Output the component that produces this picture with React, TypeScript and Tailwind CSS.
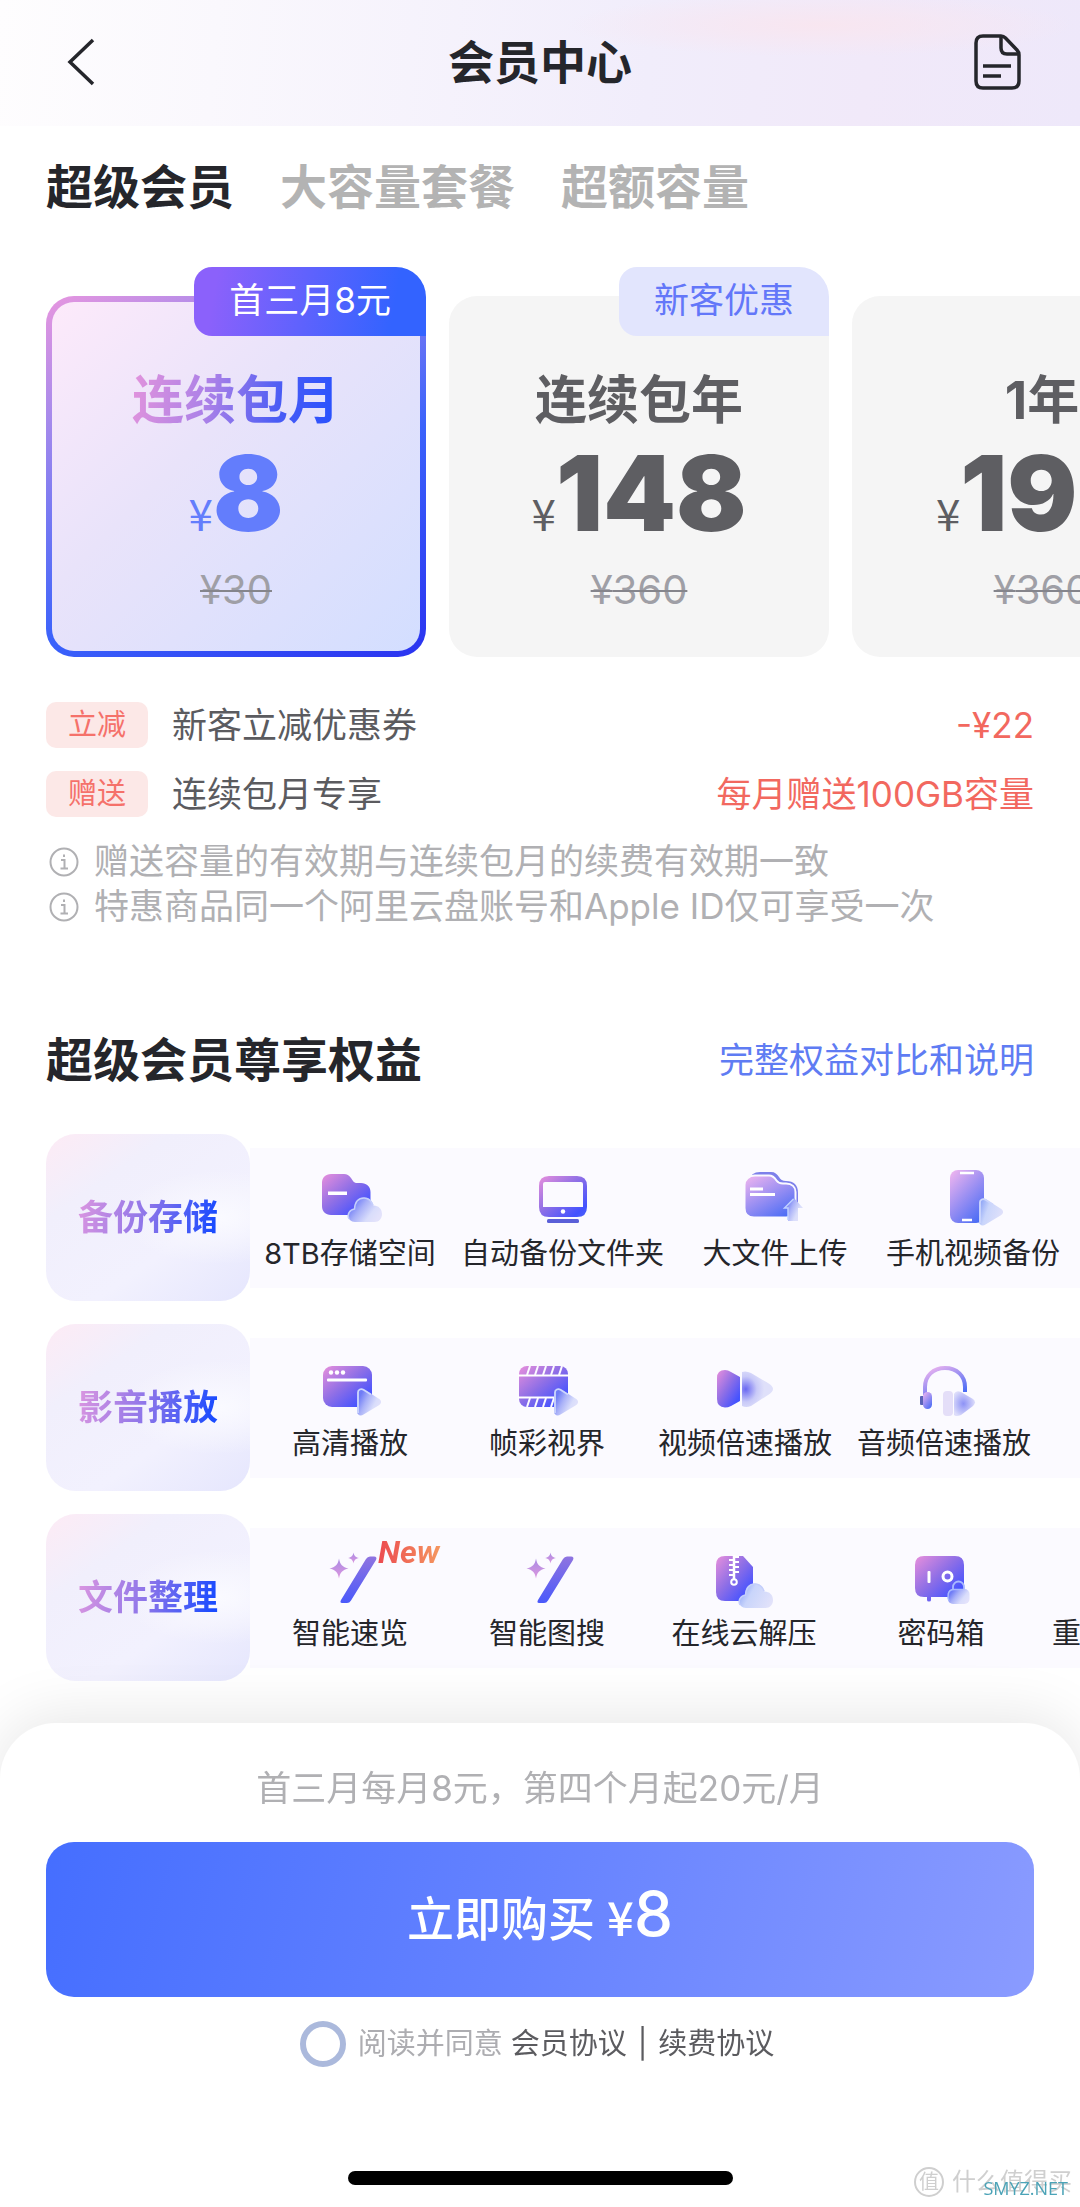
import React, { useState } from "react";

const CJK = "font-[Inter,'Noto_Sans_CJK_SC',sans-serif]";

function IconDefs() {
  return (
    <svg className="absolute h-0 w-0" aria-hidden="true">
      <defs>
        <linearGradient id="main" x1="0" y1="0" x2="1" y2="1">
          <stop offset="0" stopColor="#e88fdc" />
          <stop offset="0.45" stopColor="#8f6fe6" />
          <stop offset="0.85" stopColor="#4352ff" />
          <stop offset="1" stopColor="#4a62f8" />
        </linearGradient>
        <linearGradient id="soft" x1="0.1" y1="0" x2="0.8" y2="1">
          <stop offset="0" stopColor="#ecb3ef" />
          <stop offset="0.45" stopColor="#a393f2" />
          <stop offset="1" stopColor="#4a6cf5" />
        </linearGradient>
        <linearGradient id="glass" x1="0" y1="0.3" x2="0.9" y2="0.8">
          <stop offset="0.1" stopColor="#6f7cf6" />
          <stop offset="0.4" stopColor="#a9b1f8" />
          <stop offset="0.75" stopColor="#d9ddfb" />
          <stop offset="1" stopColor="#e3e2fb" />
        </linearGradient>
        <linearGradient id="paleGlass" x1="0" y1="0.3" x2="1" y2="0.7">
          <stop offset="0" stopColor="#8fa6f6" />
          <stop offset="0.35" stopColor="#c9d5fb" />
          <stop offset="1" stopColor="#e2e2fa" />
        </linearGradient>
        <linearGradient id="wand" x1="0" y1="0" x2="0" y2="1">
          <stop offset="0" stopColor="#8f74e0" />
          <stop offset="1" stopColor="#4a59fb" />
        </linearGradient>
        <linearGradient id="star" x1="0" y1="0" x2="0" y2="1">
          <stop offset="0" stopColor="#a98be4" />
          <stop offset="1" stopColor="#dd97df" />
        </linearGradient>
        <radialGradient id="spot" cx="0.12" cy="0.5" r="0.6">
          <stop offset="0" stopColor="#6a68f2" />
          <stop offset="0.6" stopColor="#c9caf8" />
          <stop offset="1" stopColor="#dfe0fa" />
        </radialGradient>
        <radialGradient id="core" cx="0.45" cy="0.5" r="0.55">
          <stop offset="0" stopColor="#8d92f6" />
          <stop offset="1" stopColor="#dcdcfa" />
        </radialGradient>
      </defs>
    </svg>
  );
}

function Cloud({ x, y, fill = "url(#glass)" }: { x: number; y: number; fill?: string }) {
  return (
    <g transform={`translate(${x} ${y})`}>
      <path
        d="M7 25C3 25 0 22 0 18.500C0 15 2.500 12.500 6 12C6.500 5 10 0.500 16 0.500C21 0.500 24.500 4 25.500 8.500C30.500 8.500 34 12 34 17C34 21.500 31 25 26.500 25Z"
        fill={fill}
      />
      <path d="M1 22C-1.500 17 2 12.500 6.500 12C7 5 10 1 16 1C20 1 23 3 25 8" fill="none" stroke="#c5cffb" strokeWidth="1.500" />
    </g>
  );
}

function Play({ x, y, fill = "url(#glass)" }: { x: number; y: number; fill?: string }) {
  return (
    <g transform={`translate(${x} ${y})`}>
      <path d="M0 4.500C0 1 3.500 -0.500 6.500 1L21.500 10.500C25 12.700 25 15.300 21.500 17.500L6.500 26.500C3.500 28.500 0 27 0 23.500Z" fill={fill} />
      <path d="M1 25V4.500C1 1.500 4 0.500 6.500 1.800L14 6.500" fill="none" stroke="#cdd6fc" strokeWidth="1.800" />
    </g>
  );
}

const icons: Record<string, React.ReactNode> = {
  storage: (
    <>
      <path d="M13 9H26C29 9 31 10.500 33 13L35 16C36 17.500 37.500 18 39 18H43C48.500 18 52.500 21.500 52.500 27V41C52.500 46.500 49 50 43.500 50H13C7.500 50 4 46.500 4 41V18C4 12.500 7.500 9 13 9Z" fill="url(#main)" />
      <rect x="10" y="26.500" width="19" height="3.500" fill="#fff" />
      <Cloud x={30} y={32} />
    </>
  ),
  monitor: (
    <>
      <path fillRule="evenodd" d="M18 11H46Q56 11 56 21V42Q56 52 46 52H18Q8 52 8 42V21Q8 11 18 11ZM14 17Q12 17 12 19V42H52V19Q52 17 50 17Z" fill="url(#main)" />
      <circle cx="32" cy="46.500" r="2.200" fill="#fff" />
      <rect x="16" y="54" width="32" height="4" rx="1.500" fill="#5a5fd8" />
    </>
  ),
  upload: (
    <>
      <path d="M5 16Q8 7 17 7H28C32 7 34 9 36 12C37.500 14.500 39.500 16 43 16C51 16 55 20 55 28V42H30Z" fill="#7d80ea" />
      <path
        d="M12 10.500H26C30 10.500 31.500 12.500 33.500 15.500C35 17.800 37 18.500 40 18.500H43C49 18.500 52.500 22 52.500 27V43C52.500 49 49 52.500 43 52.500H11C5 52.500 1.500 49 1.500 43V20C1.500 14.500 6 10.500 12 10.500Z"
        fill="url(#soft)"
        stroke="#fbfaff"
        strokeWidth="2"
      />
      <path d="M7 24H20M7 29.500H32" stroke="#fff" strokeWidth="3" />
      <path d="M51 33L60 43H55V56H45V43H41Z" fill="url(#glass)" />
      <path d="M45 55V43H41.500L50.500 34" fill="none" stroke="#bfd0ff" strokeWidth="1.500" />
    </>
  ),
  phone: (
    <>
      <rect x="9" y="5" width="34" height="53" rx="8" fill="url(#soft)" />
      <path d="M19 8H33M21 55H31" stroke="#fff" strokeWidth="2.400" />
      <Play x={38} y={33} fill="url(#paleGlass)" />
    </>
  ),
  window: (
    <>
      <rect x="5" y="11" width="49" height="41" rx="9" fill="url(#main)" />
      <circle cx="13" cy="17.500" r="2.200" fill="#fff" />
      <circle cx="19" cy="17.500" r="2.200" fill="#fff" />
      <circle cx="25" cy="17.500" r="2.200" fill="#fff" />
      <rect x="9" y="23.500" width="40" height="3" rx="1" fill="#fff" />
      <Play x={39} y={33} />
    </>
  ),
  film: (
    <>
      <rect x="4" y="11" width="49" height="41" rx="8" fill="url(#main)" />
      <path d="M3 20.500H54M3 42.500H54" stroke="#fff" strokeWidth="2" />
      <path d="M12 20L15 11M20 20L23 11M28 20L31 11M36 20L39 11M44 20L47 11M12 52L15 43M20 52L23 43M28 52L31 43M36 52L39 43" stroke="#fbfaff" strokeWidth="2" />
      <Play x={39} y={33} />
    </>
  ),
  speed: (
    <>
      <path d="M4 23Q4 15 12 15Q15 15 18 17L27 22V46L18 51Q15 52.500 12 52.500Q4 52 4 44Z" fill="url(#main)" />
      <path d="M29 17Q33 15.500 38 18L55 28Q60 31 60 34Q60 37 55 40L38 51Q33 53 29 51Z" fill="url(#spot)" />
    </>
  ),
  headphone: (
    <>
      <path d="M13 40V32C13 21 21 13 33 13C45 13 53 21 53 32V37" fill="none" stroke="url(#soft)" strokeWidth="4" />
      <rect x="8" y="41" width="4" height="9" rx="1" fill="#5a63b8" />
      <rect x="11" y="37" width="9" height="17" rx="4.500" fill="url(#soft)" />
      <rect x="31" y="36" width="10" height="25" rx="4" fill="#e4def8" />
      <path d="M42 39Q44 35 49 37L61 44Q65 47 61 51L49 60Q44 62 42 60Z" fill="url(#core)" />
    </>
  ),
  wand: (
    <>
      <path d="M48 14Q49.500 11.500 52 11.500H56Q59.500 11.500 58 15L33 55.500Q31.500 58 29 58H24Q21.500 58 23 55Z" fill="url(#wand)" />
      <path d="M21 13.500C22 19.500 24.500 22 30.500 23.500C24.500 25 22 27.500 21 33.500C20 27.500 17.500 25 11.500 23.500C17.500 22 20 19.500 21 13.500Z" fill="url(#star)" />
      <path d="M35.500 7.500C36.200 11 37.500 12.300 41 13C37.500 13.700 36.200 15 35.500 18.500C34.800 15 33.500 13.700 30 13C33.500 12.300 34.800 11 35.500 7.500Z" fill="url(#star)" />
    </>
  ),
  zip: (
    <>
      <path d="M13 11H31L41 22V47Q41 56 32 56H13Q4 56 4 47V20Q4 11 13 11Z" fill="url(#main)" />
      <path d="M17 15H21M17 20H21M17 25H21M17 30H21M23 12H27M23 17H27M23 22H27M23 27H27" stroke="#fff" strokeWidth="2" />
      <path d="M22 10V34" stroke="#fff" strokeWidth="2.500" />
      <circle cx="22" cy="37" r="2.800" fill="none" stroke="#fff" strokeWidth="2" />
      <Cloud x={27} y={38} fill="url(#paleGlass)" />
    </>
  ),
  safe: (
    <>
      <path d="M15 11H46Q55 11 55 20V43Q55 52 46 52H22V55Q22 56.500 20 56.500Q18 56.500 18 55V52H15Q6 52 6 43V20Q6 11 15 11Z" fill="url(#main)" />
      <rect x="18.500" y="26" width="3" height="12" rx="1" fill="#fff" />
      <circle cx="38.500" cy="31.500" r="4.500" fill="none" stroke="#fff" strokeWidth="3" />
      <path d="M44 45V42A5.500 5.500 0 0 1 55 42V45" fill="none" stroke="#a9b9ff" strokeWidth="1.800" />
      <rect x="39" y="44" width="21.500" height="15" rx="5" fill="url(#glass)" />
      <path d="M40 56Q38.500 53 39.200 49Q40 44.500 45 44.500H54" fill="none" stroke="#a9b9ff" strokeWidth="1.500" />
    </>
  ),
  dedupe: <rect x="8" y="11" width="40" height="41" rx="9" fill="url(#main)" />,
};

const plans = [
  { name: "连续包月", price: "8", old: "30", badge: "首三月8元" },
  { name: "连续包年", price: "148", old: "360", badge: "新客优惠" },
  { name: "1年", price: "198", old: "360" },
];

const groups = [
  {
    title: "备份存储",
    items: [
      { icon: "storage", label: "8TB存储空间" },
      { icon: "monitor", label: "自动备份文件夹" },
      { icon: "upload", label: "大文件上传" },
      { icon: "phone", label: "手机视频备份" },
    ],
  },
  {
    title: "影音播放",
    items: [
      { icon: "window", label: "高清播放" },
      { icon: "film", label: "帧彩视界" },
      { icon: "speed", label: "视频倍速播放" },
      { icon: "headphone", label: "音频倍速播放" },
    ],
  },
  {
    title: "文件整理",
    items: [
      { icon: "wand", label: "智能速览", isNew: true },
      { icon: "wand", label: "智能图搜" },
      { icon: "zip", label: "在线云解压" },
      { icon: "safe", label: "密码箱" },
      { icon: "dedupe", label: "重复文件清理" },
    ],
  },
];

function Header() {
  return (
    <header className="flex h-[126px] items-center justify-between bg-[radial-gradient(ellipse_at_76%_20%,#f8e6f0_0%,transparent_22%),linear-gradient(95deg,#fefdfe_0%,#faf8fd_20%,#f1edfb_60%,#f1e9f9_80%,#eee8fa_100%)] px-[56px] pb-[2px]">
      <button aria-label="返回" className="flex h-[56px] w-[52px] items-center">
        <svg width="52" height="52" viewBox="0 0 52 52" fill="none" stroke="#25262b" strokeWidth="3.500">
          <path d="M37 4L14 26L37 48" />
        </svg>
      </button>
      <h1 className="text-[46px] leading-[56px] font-bold text-[#25262b]">会员中心</h1>
      <button aria-label="订单" className="flex h-[56px] w-[52px] items-center">
        <svg width="52" height="56" viewBox="0 0 52 56" fill="none" stroke="#25262b" strokeWidth="3.500">
          <path d="M11 2H29C31 2 32 2.500 33.500 4L45 16C46.500 17.500 47 19 47 21V47Q47 54 40 54H11Q4 54 4 47V9Q4 2 11 2Z" strokeLinejoin="round" />
          <path d="M29 3V14Q29 20 35 20H46" />
          <path d="M11 32H39M11 42H29" />
        </svg>
      </button>
    </header>
  );
}

function PlanCard({ plan, active, onSelect }: { plan: (typeof plans)[number]; active: boolean; onSelect: () => void }) {
  return (
    <button
      onClick={onSelect}
      aria-pressed={active}
      className={
        "relative h-[361px] w-[380px] shrink-0 rounded-[28px] p-[6px] " +
        (active ? "bg-[linear-gradient(150deg,#e796df_0%,#a58aec_22%,#3a62fb_60%,#2a33f0_100%)]" : "bg-[#f5f5f5]")
      }
    >
      <span
        className={
          "flex h-full flex-col items-center rounded-[22px] pt-[67px] " +
          (active ? "bg-[linear-gradient(135deg,#fdeafa_0%,#e9e3fa_40%,#d3deff_100%)]" : "")
        }
      >
        <span
          className={
            "text-[52px] leading-[64px] font-bold " +
            (active ? "bg-[linear-gradient(100deg,#e394dc_0%,#a980e8_38%,#4a5cf5_70%,#2450ff_100%)] bg-clip-text text-transparent" : "text-[#5e5e62]")
          }
        >
          {plan.name}
        </span>
        <span className={"mt-[8px] flex items-baseline leading-[104px] " + (active ? "text-[#637dfc]" : "text-[#5e5e62]")}>
          <span className="font-['Noto_Sans_CJK_SC',sans-serif] text-[44px] leading-[60px]">¥</span>
          <span className="text-[104px] font-black">{plan.price}</span>
        </span>
        <s className="mt-[18px] text-[40px] leading-[54px] text-[#9f9fa6] decoration-[#85858c] decoration-2">¥{plan.old}</s>
      </span>
      {plan.badge && (
        <span
          className={
            "absolute right-0 -top-[29px] rounded-l-[18px] rounded-tr-[30px] px-[35px] pb-[3px] text-[35px] leading-[66px] whitespace-nowrap " +
            (active ? "bg-[linear-gradient(100deg,#8b61fb_10%,#3363ff_85%)] text-white" : "bg-[#e2e5fd] text-[#6377f9]")
          }
        >
          {plan.badge}
        </span>
      )}
    </button>
  );
}

function InfoIcon() {
  return (
    <svg width="30" height="30" viewBox="0 0 30 30" fill="none" stroke="#b0b0b3" strokeWidth="2" aria-hidden="true">
      <circle cx="15" cy="15" r="13.500" />
      <path d="M15 7.500V10M12 13H15.500V21M11.500 21.500H19" />
    </svg>
  );
}

export default function App() {
  const [tab, setTab] = useState(0);
  const [plan, setPlan] = useState(0);
  return (
    <div className={"flex min-h-screen flex-col overflow-x-hidden bg-white text-[#25262b] " + CJK}>
      <IconDefs />
      <Header />
      <main className="relative">
        <div role="tablist" className="flex gap-[46px] px-[46px] pt-[32px]">
          {["超级会员", "大容量套餐", "超额容量"].map((t, i) => (
            <button
              key={t}
              role="tab"
              aria-selected={tab === i}
              onClick={() => setTab(i)}
              className={"text-[47px] leading-[58px] font-bold " + (tab === i ? "text-[#25262b]" : "text-[#b3b3b3]")}
            >
              {t}
            </button>
          ))}
        </div>

        <div className="flex gap-[23px] overflow-x-auto px-[46px] pt-[80px] [scrollbar-width:none]">
          {plans.map((p, i) => (
            <PlanCard key={p.name} plan={p} active={plan === i} onSelect={() => setPlan(i)} />
          ))}
        </div>

        <section className="px-[46px] pt-[45px] text-[35px]">
          <div className="flex items-center gap-[24px]">
            <span className="rounded-[10px] bg-[#fce8e7] px-[22px] text-[29px] leading-[46px] text-[#f5716a]">立减</span>
            <span className="leading-[46px] text-[#5b5b5f]">新客立减优惠券</span>
            <span className="ml-auto leading-[46px] text-[#f2685f]">-¥22</span>
          </div>
          <div className="mt-[23px] flex items-center gap-[24px]">
            <span className="rounded-[10px] bg-[#fce8e7] px-[22px] text-[29px] leading-[46px] text-[#f5716a]">赠送</span>
            <span className="leading-[46px] text-[#5b5b5f]">连续包月专享</span>
            <span className="ml-auto leading-[46px] text-[#f2685f]">每月赠送100GB容量</span>
          </div>
          <ul className="mt-[22px] px-[3px] leading-[45px] text-[#b0b0b3]">
            <li className="flex items-center gap-[15px]">
              <InfoIcon />
              赠送容量的有效期与连续包月的续费有效期一致
            </li>
            <li className="flex items-center gap-[15px]">
              <InfoIcon />
              特惠商品同一个阿里云盘账号和Apple ID仅可享受一次
            </li>
          </ul>
        </section>

        <section className="pt-[101px]">
          <div className="flex items-center justify-between px-[46px]">
            <h2 className="text-[47px] leading-[60px] font-bold">超级会员尊享权益</h2>
            <a href="#compare" className="text-[35px] leading-[60px] text-[#5f7cf3]">
              完整权益对比和说明
            </a>
          </div>
          <div className="mt-[44px] flex flex-col gap-[23px] pl-[46px]">
            {groups.map((g) => (
              <div key={g.title} className="flex items-center">
                <h3 className="flex h-[167px] w-[204px] shrink-0 items-center justify-center rounded-[30px] bg-[radial-gradient(ellipse_at_85%_50%,#fafaff_0%,transparent_40%),linear-gradient(145deg,#fdebf5_0%,#f1effc_28%,#f2f1fe_65%,#e5e6fd_100%)] text-[35px] font-bold">
                  <span className="bg-[linear-gradient(100deg,#dd97e0_0%,#8a74ea_50%,#1a4bff_95%)] bg-clip-text text-transparent">{g.title}</span>
                </h3>
                <ul className="flex min-w-0 flex-1 gap-[25px] overflow-x-auto bg-[#fbfaff] pl-[14px] [scrollbar-width:none]">
                  {g.items.map((it) => (
                    <li key={it.label} className="relative flex h-[140px] min-w-[172px] shrink-0 flex-col items-center pt-[17px]">
                      <svg width="64" height="64" viewBox="0 0 64 64" aria-hidden="true">
                        {icons[it.icon]}
                      </svg>
                      <span className="mt-[4px] text-[29px] leading-[42px] whitespace-nowrap">{it.label}</span>
                      {"isNew" in it && (
                        <span className="absolute top-[2px] left-[114px] bg-[linear-gradient(90deg,#ec4a50,#f59a60)] bg-clip-text pr-[4px] font-[Roboto,sans-serif] text-[32px] leading-[44px] font-bold text-transparent italic">
                          New
                        </span>
                      )}
                    </li>
                  ))}
                </ul>
              </div>
            ))}
          </div>
        </section>
      </main>

      <footer className="relative mt-[42px] flex flex-1 flex-col items-center rounded-t-[56px] bg-white px-[46px] pt-[39px] pb-[22px] shadow-[0_-6px_60px_rgba(0,0,0,0.1)]">
        <p className="text-[35px] leading-[52px] text-[#b0b0b3]">首三月每月8元，第四个月起20元/月</p>
        <button className="mt-[28px] flex h-[155px] w-full items-center justify-center rounded-[28px] bg-[linear-gradient(105deg,#456eff_0%,#6683ff_50%,#8a9bff_100%)] pb-[6px] text-white">
          <span className="flex items-baseline text-[47px] leading-[76px] font-medium">
            立即购买
            <span className="ml-[12px] font-['Noto_Sans_CJK_SC',sans-serif]">¥</span>
            <span className="text-[62px]">8</span>
          </span>
        </button>
        <div className="mt-[24px] flex items-center pr-[6px] text-[29px] leading-[46px] text-[#5b5b5f]">
          <input id="agree" type="checkbox" className="h-[46px] w-[46px] appearance-none rounded-full border-[6px] border-[#abb9dc] checked:bg-[#637dfc]" />
          <label htmlFor="agree" className="ml-[12px] text-[#adadb1]">
            阅读并同意
          </label>
          <a href="#member" className="ml-[8px]">会员协议</a>
          <span className="mx-[11px]">|</span>
          <a href="#renew">续费协议</a>
        </div>
        <div className="mt-auto h-[14px] w-[385px] rounded-full bg-black" />
        <div className="absolute right-[8px] bottom-[7px] flex items-center gap-[8px] text-[24px] leading-[36px] text-[#cfcfcf]">
          <span className="flex h-[30px] w-[30px] items-center justify-center rounded-full border-2 border-[#cfcfcf] text-[20px]">值</span>
          什么值得买
          <span className="absolute right-[4px] bottom-0 font-['Open_Sans',sans-serif] text-[18px] leading-[24px] text-[#4ba3b7]">SMYZ.NET</span>
        </div>
      </footer>
    </div>
  );
}
